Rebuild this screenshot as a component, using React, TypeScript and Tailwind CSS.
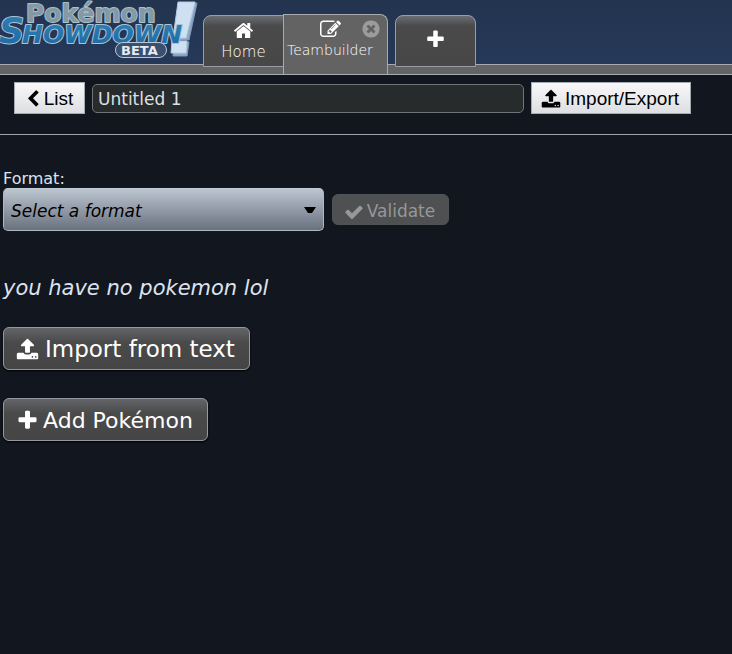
import React from 'react';

const icons = {
  home: 'M1472 992v480q0 26-19 45t-45 19h-384v-384h-256v384h-384q-26 0-45-19t-19-45v-480q0-1 .5-3t.5-3l575-474 575 474q1 2 1 6zm223-69l-62 74q-8 9-21 11h-3q-13 0-21-7l-692-577-692 577q-12 8-24 7-13-2-21-11l-62-74q-8-10-7-23.5t11-21.5l719-599q32-26 76-26t76 26l244 204v-195q0-14 9-23t23-9h192q14 0 23 9t9 23v408l219 182q10 8 11 21.5t-7 23.5z',
  edit: 'M888 1184l116-116-152-152-116 116v56h96v96h56zm440-720q-16-16-33 1l-350 350q-17 17-1 33t33-1l350-350q17-17 1-33zm80 594v190q0 119-84.5 203.5t-203.5 84.5h-832q-119 0-203.5-84.5t-84.5-203.5v-832q0-119 84.5-203.5t203.5-84.5h832q63 0 117 25 15 7 18 23 3 17-9 29l-49 49q-14 14-32 8-23-6-45-6h-832q-66 0-113 47t-47 113v832q0 66 47 113t113 47h832q66 0 113-47t47-113v-126q0-13 9-22l64-64q15-15 35-7t20 29zm-96-738l288 288-672 672h-288v-288zm444 132l-92 92-288-288 92-92q28-28 68-28t68 28l152 152q28 28 28 68t-28 68z',
  close: 'M1277 1122q0-26-19-45l-181-181 181-181q19-19 19-45 0-27-19-46l-90-90q-19-19-46-19-26 0-45 19l-181 181-181-181q-19-19-45-19-27 0-46 19l-90 90q-19 19-19 46 0 26 19 45l181 181-181 181q-19 19-19 45 0 27 19 46l90 90q19 19 46 19 26 0 45-19l181-181 181 181q19 19 45 19 27 0 46-19l90-90q19-19 19-46zm387-226q0 209-103 385.5t-279.5 279.5-385.5 103-385.5-103-279.5-279.5-103-385.5 103-385.5 279.5-279.5 385.5-103 385.5 103 279.5 279.5 103 385.5z',
  plus: 'M1600 736v192q0 40-28 68t-68 28h-416v416q0 40-28 68t-68 28h-192q-40 0-68-28t-28-68v-416h-416q-40 0-68-28t-28-68v-192q0-40 28-68t68-28h416v-416q0-40 28-68t68-28h192q40 0 68 28t28 68v416h416q40 0 68 28t28 68z',
  back: 'M1427 301l-531 531 531 531q19 19 19 45t-19 45l-166 166q-19 19-45 19t-45-19l-742-742q-19-19-19-45t19-45l742-742q19-19 45-19t45 19l166 166q19 19 19 45t-19 45z',
  upload: 'M1344 1472q0-26-19-45t-45-19-45 19-19 45 19 45 45 19 45-19 19-45zm256 0q0-26-19-45t-45-19-45 19-19 45 19 45 45 19 45-19 19-45zm128-224v320q0 40-28 68t-68 28h-1472q-40 0-68-28t-28-68v-320q0-40 28-68t68-28h427q21 56 70.5 92t110.5 36h256q61 0 110.5-36t70.5-92h427q40 0 68 28t28 68zm-325-648q-17 40-59 40h-256v448q0 26-19 45t-45 19h-256q-26 0-45-19t-19-45v-448h-256q-42 0-59-40-17-39 14-69l448-448q18-19 45-19t45 19l448 448q31 30 14 69z',
  check: 'M1671 566q0 40-28 68l-724 724-136 136q-28 28-68 28t-68-28l-136-136-362-362q-28-28-28-68t28-68l136-136q28-28 68-28t68 28l294 295 656-657q28-28 68-28t68 28l136 136q28 28 28 68z',
};

function Icon({ name, className }: { name: keyof typeof icons; className: string }) {
  return (
    <svg viewBox="0 0 1792 1792" fill="currentColor" aria-hidden="true" className={`shrink-0 ${className}`}>
      <path d={icons[name]} />
    </svg>
  );
}

function Logo() {
  return (
    <svg viewBox="0 0 198 62" className="block h-[62px] w-[198px]" role="img" aria-label="Pokémon Showdown! Beta">
      <defs>
        <linearGradient id="word" x1="0" y1="0" x2="0" y2="1">
          <stop offset="0" stopColor="#2f80b6" />
          <stop offset="1" stopColor="#1f689f" />
        </linearGradient>
      </defs>
      <path d="M180 3h17l-8 37h-13zM174 42h15l-2 14h-14z" fill="#8fa9c4" stroke="#7d98b6" />
      <path d="M178 2h17l-9 36h-13zM172 41h15l-1 12h-15z" fill="#cfe0f2" stroke="#b5cbe2" />
      <g fontFamily="'DejaVu Sans', sans-serif" fontWeight="700" strokeLinejoin="round" paintOrder="stroke">
        <text x="26" y="22" fontSize="25" fill="#8499a6" stroke="#a9bfc9" strokeWidth="2">
          Pokémon
        </text>
        <g fontStyle="italic" fill="url(#word)" stroke="#a9c4d8" strokeWidth="2">
          <text x="-1" y="43" fontSize="35">S</text>
          <text x="22" y="43" fontSize="25">HOWDOWN</text>
        </g>
      </g>
      <rect x="115.500" y="42.500" width="51" height="15" rx="7.500" fill="#3c4f6e" stroke="#b6c8da" />
      <text x="121" y="55" fontFamily="'DejaVu Sans', sans-serif" fontWeight="700" fontSize="13" fill="#e3edf6">
        BETA
      </text>
    </svg>
  );
}

const darkTab =
  'flex h-[52px] w-[81px] flex-col items-center border border-[#9a9ea4] bg-linear-to-b from-[#6b6e75] via-[#4a4a4a] via-20% to-[#474747] text-white';
const darkButton =
  'flex h-[43px] items-center rounded-md border border-[#95999f] bg-linear-to-b from-[#636569] via-[#4a4a4a] via-35% to-[#454545] pt-[2px] pr-[14px] pl-3 text-white shadow-[0_1px_2px_#000]';
const lightButton =
  'flex h-8 items-center border border-[#a5abb3] bg-linear-to-b from-[#f8f8f9] to-[#dedfe2] pt-[2px] text-[19px] text-black [font-family:"Liberation_Sans",Arial,sans-serif]';

export default function App() {
  return (
    <div className='min-h-screen bg-[#11161f] text-[#dde3ee] [font-family:"DejaVu_Sans",Verdana,sans-serif]'>
      <header className="flex h-[75px] flex-col border-b border-[#a7abb0] bg-linear-to-b from-[#23344f] to-[#26395a]">
        <div className="flex h-[64px] items-start">
          <a href="#home" className="mr-[5px] block">
            <Logo />
          </a>
          <nav className="z-10 flex items-start pt-[14px]" aria-label="Rooms">
            <a href="#home" className={`${darkTab} mt-px rounded-tl-lg pt-1`}>
              <Icon name="home" className="size-[21px]" />
              <span className="text-[15px] leading-[22px] font-extralight">Home</span>
            </a>
            <a
              href="#teambuilder"
              className="-ml-px flex h-[60px] w-[105px] flex-col rounded-tr-lg border border-b-0 border-[#a7abb0] bg-[#636363] pt-1 pl-[3px] text-white"
              aria-current="page"
            >
              <Icon name="edit" className="ml-[33px] size-[21px]" />
              <span className="text-[14px] leading-5 font-extralight">Teambuilder</span>
            </a>
            <button type="button" aria-label="Close Teambuilder" className="z-10 mt-[5px] -ml-[27px] text-[#9c9c9c]">
              <Icon name="close" className="size-5" />
            </button>
            <button type="button" aria-label="New tab" className={`${darkTab} mt-px ml-[14px] justify-center rounded-t-lg`}>
              <Icon name="plus" className="mb-1 size-[21px]" />
            </button>
          </nav>
        </div>
        <div className="h-[10px] border-t border-[#a7abb0] bg-[#636466]" />
      </header>

      <div className="flex items-center gap-[7px] border-b border-[#a0a5ac] px-[14px] pt-[7px] pb-5">
        <button type="button" className={`${lightButton} w-[71px] justify-center gap-[2px] pr-[2px]`}>
          <Icon name="back" className="size-[18px]" />
          List
        </button>
        <input
          aria-label="Team name"
          defaultValue="Untitled 1"
          className="h-[29px] w-[432px] min-w-0 rounded-[5px] border border-[#6f7478] bg-[#282b2c] px-[5px] pt-[2px] text-[17px] text-[#dde0e4]"
        />
        <button type="button" className={`${lightButton} w-40 justify-center gap-1 pr-[2px]`}>
          <Icon name="upload" className="size-5" />
          Import/Export
        </button>
      </div>

      <main className="px-[3px] pt-9">
        <label htmlFor="format" className="block h-[17px] text-[16px] leading-4">
          Format:
        </label>
        <div className="flex items-center gap-2">
          <div className="relative">
            <select
              id="format"
              className="block h-[43px] w-[321px] appearance-none rounded-[5px] border border-[#aeb7c2] border-t-[#c3ccd6] bg-linear-to-b from-[#bcc6d0] to-[#6a7280] px-[7px] pt-[5px] text-[17px] text-black italic"
            >
              <option>Select a format</option>
            </select>
            <svg viewBox="0 0 12 6" className="pointer-events-none absolute top-[19px] right-[8px] h-[6px] w-3" aria-hidden="true">
              <path d="M0 0h12L8 6H4z" />
            </svg>
          </div>
          <button
            type="button"
            disabled
            className="flex h-[31px] w-[117px] items-center justify-center gap-[3px] rounded-md border border-[#505356] bg-[#4e5051] pt-1 pr-[2px] text-[17px] text-[#969899]"
          >
            <Icon name="check" className="size-5" />
            Validate
          </button>
        </div>

        <p className="mt-[43px] text-[21px] leading-7 italic">you have no pokemon lol</p>

        <div className="mt-[25px] flex flex-col items-start gap-7">
          <button type="button" className={`${darkButton} gap-[6px] text-[23px]`}>
            <Icon name="upload" className="size-[23px]" />
            Import from text
          </button>
          <button type="button" className={`${darkButton} gap-1 text-[22px]`}>
            <Icon name="plus" className="size-[23px]" />
            Add Pokémon
          </button>
        </div>
      </main>
    </div>
  );
}
